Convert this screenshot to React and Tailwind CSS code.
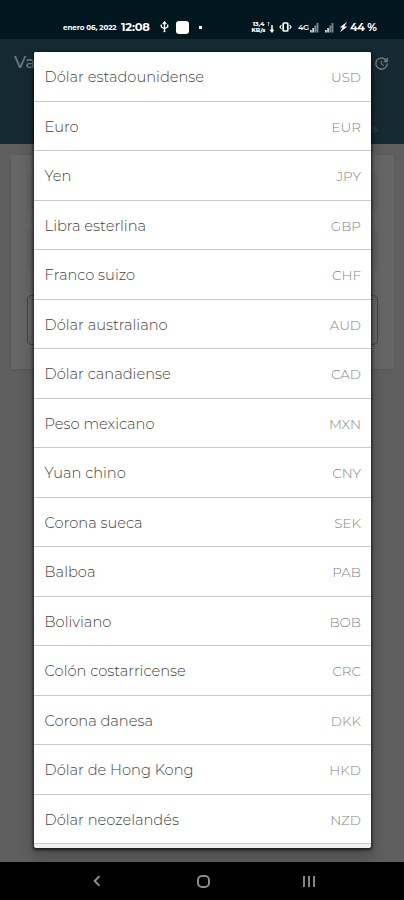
import { useState } from "react";

const currencies = [
  { name: "Dólar estadounidense", code: "USD" },
  { name: "Euro", code: "EUR" },
  { name: "Yen", code: "JPY" },
  { name: "Libra esterlina", code: "GBP" },
  { name: "Franco suizo", code: "CHF" },
  { name: "Dólar australiano", code: "AUD" },
  { name: "Dólar canadiense", code: "CAD" },
  { name: "Peso mexicano", code: "MXN" },
  { name: "Yuan chino", code: "CNY" },
  { name: "Corona sueca", code: "SEK" },
  { name: "Balboa", code: "PAB" },
  { name: "Boliviano", code: "BOB" },
  { name: "Colón costarricense", code: "CRC" },
  { name: "Corona danesa", code: "DKK" },
  { name: "Dólar de Hong Kong", code: "HKD" },
  { name: "Dólar neozelandés", code: "NZD" },
];

function StatusBar() {
  return (
    <div className="flex h-[39px] shrink-0 items-end bg-[#00171f] pr-[25px] pb-[5px] pl-[63px] text-white">
      <div className="flex h-[14px] w-full items-center whitespace-nowrap">
        <span className="w-[58px] pt-[2px] text-[7.2px] leading-none font-bold tracking-[-0.1px]">
          enero 06, 2022
        </span>
        <span className="w-[39px] pt-px text-[11.5px] leading-none font-bold tracking-[-0.2px]">
          12:08
        </span>
        <svg width="9" height="12" viewBox="0 0 9 12" fill="none" stroke="currentColor" strokeWidth="1.3">
          <path d="M4.5 11V1.5M2.8 3 4.5 1l1.7 2M1.3 3.5v2.3l3.2 2M7.7 3.5v2.3l-3.2 2" />
          <path d="M3.6 10.4h1.8" strokeWidth="1.5" />
        </svg>
        <span className="ml-[7px] h-[13px] w-[13px] rounded-[3px] bg-white" />
        <span className="ml-[10px] h-[3px] w-[3px] bg-white" />

        <div className="ml-auto flex items-center">
          <span className="flex w-[17px] flex-col text-center text-[5.8px] leading-[6px] font-extrabold">
            <span className="h-[6px] overflow-hidden">13,4</span>
            <span className="h-[6px] overflow-hidden">KB/s</span>
          </span>
          <svg width="7" height="12" viewBox="0 0 7 12" fill="none" stroke="currentColor">
            <path d="M1.5 5V1M0.4 2.4 1.5 1l1.1 1.4" strokeWidth="0.8" opacity="0.7" />
            <path d="M5 4v6M3.3 8.6 5 10.8l1.6-2.2" strokeWidth="1.5" />
          </svg>
          {/* vibrate */}
          <svg className="ml-[5px]" width="13" height="12" viewBox="0 0 13 12" fill="none" stroke="currentColor">
            <rect x="4.2" y="2" width="4.6" height="8" rx="0.8" strokeWidth="1.7" />
            <path d="M2.4 4 1 6l1.4 2M10.6 4 12 6l-1.4 2" strokeWidth="1.2" />
          </svg>
          <span className="ml-[6px] w-[12px] text-[8px] leading-none font-semibold tracking-[-0.4px]">4G</span>
          <Signal />
          <span className="w-[6px]" />
          <Signal />
          <svg className="ml-[5px]" width="9" height="12" viewBox="0 0 9 12" fill="currentColor">
            <path d="M8.2 0.8.6 6.6h3L1 11.2l7.4-5.8H5.2L8.2.8Z" />
          </svg>
          <span className="ml-[2px] w-[29px] pt-px text-[11px] leading-none font-bold tracking-[-0.3px]">
            44 %
          </span>
        </div>
      </div>
    </div>
  );
}

function Signal() {
  return (
    <svg width="9" height="11" viewBox="0 0 9 11" fill="currentColor">
      <path d="M0 8h1.8v2.5H0zM2.2 6H4v4.5H2.2z" opacity="0.8" />
      <path d="M4.4 3.5h1.8v7H4.4zM6.6 1h1.8v9.5H6.6z" opacity="0.5" />
    </svg>
  );
}

function AppBar() {
  return (
    <header className="h-[105px] shrink-0 bg-[#162a33] text-[#707b80]">
      <div className="flex h-[48px] items-center justify-between pr-[14px] pl-[14px]">
        <h1 className="text-[17px] font-medium">Va</h1>
        <svg width="17" height="17" viewBox="0 0 24 24" fill="currentColor">
          <path d="M21 10.12h-6.78l2.74-2.82a7 7 0 0 0-9.8-.1 6.9 6.9 0 0 0 0 9.8 7 7 0 0 0 9.8 0c1.36-1.35 2.04-2.92 2.04-4.9h2c0 1.98-.88 4.55-2.64 6.29a9 9 0 0 1-12.72 0 8.85 8.85 0 0 1-.02-12.57 9 9 0 0 1 12.65 0L21 3v7.12ZM12.5 8v4.25l3.5 2.08-.72 1.21L11 13V8h1.5Z" />
        </svg>
      </div>
      <div className="flex h-[57px] items-center justify-end pt-[26px] pr-[27px] text-[11px] text-[#34474f]">
        s
      </div>
    </header>
  );
}

function ConverterCard() {
  return (
    <div className="mr-[10px] ml-[11px] mt-[11px] flex h-[214px] flex-col bg-[#666666] px-[16px] pt-[17px] shadow-[0_1px_2px_#555555]">
      <div className="h-[40px] rounded-[3px] bg-[#626262]" />
      <div className="mt-[18px] h-[40px] rounded-[3px] bg-[#626262]" />
      <div className="mt-[25px] h-[50px] rounded-[5px] border border-[#454545]" />
    </div>
  );
}

function NavBar() {
  return (
    <nav className="grid h-[38px] shrink-0 grid-cols-[97px_212px_1fr] bg-black text-[#929292]">
      <div className="flex items-center justify-end">
        <svg className="mr-[-5px]" width="10" height="14" viewBox="0 0 10 14" fill="none" stroke="currentColor" strokeWidth="1.9">
          <path d="M7.5 2.2 2.7 7l4.8 4.8" />
        </svg>
      </div>
      <div className="flex items-center justify-center">
        <span className="h-[13px] w-[13px] rounded-[5px] border-2 border-[#8c8c8c]" />
      </div>
      <div className="ml-[-6px] flex items-center gap-[3px]">
        <span className="h-[11px] w-[2px] bg-[#858585]" />
        <span className="h-[11px] w-[2px] bg-[#858585]" />
        <span className="h-[11px] w-[2px] bg-[#858585]" />
      </div>
    </nav>
  );
}

export default function App() {
  const [selected, setSelected] = useState("USD");

  return (
    <div className="relative flex h-[900px] w-[404px] flex-col overflow-hidden bg-[#5f5f5f] font-['Montserrat','Inter',sans-serif]">
      <StatusBar />
      <AppBar />
      <main className="flex-1">
        <ConverterCard />
      </main>
      <NavBar />

      {/* currency picker */}
      <div
        role="listbox"
        className="absolute top-[52px] left-[34px] h-[796px] w-[337px] overflow-hidden rounded-[2px] bg-[#f1f1f1] shadow-[0_1px_3px_1px_rgba(0,0,0,0.65),0_7px_14px_2px_rgba(0,0,0,0.22)]"
      >
        {currencies.map((currency) => (
          <button
            key={currency.code}
            role="option"
            aria-selected={selected === currency.code}
            onClick={() => setSelected(currency.code)}
            className="flex h-[49.5px] w-full items-center justify-between border-b border-[#cbcbcb] bg-white pt-[2px] pr-[10px] pl-[10.6px] text-left font-light"
          >
            <span className="pt-[2px] text-[14.65px] text-[#424242]">{currency.name}</span>
            <span className="text-[13.5px] text-[#858585]">{currency.code}</span>
          </button>
        ))}
      </div>
    </div>
  );
}
